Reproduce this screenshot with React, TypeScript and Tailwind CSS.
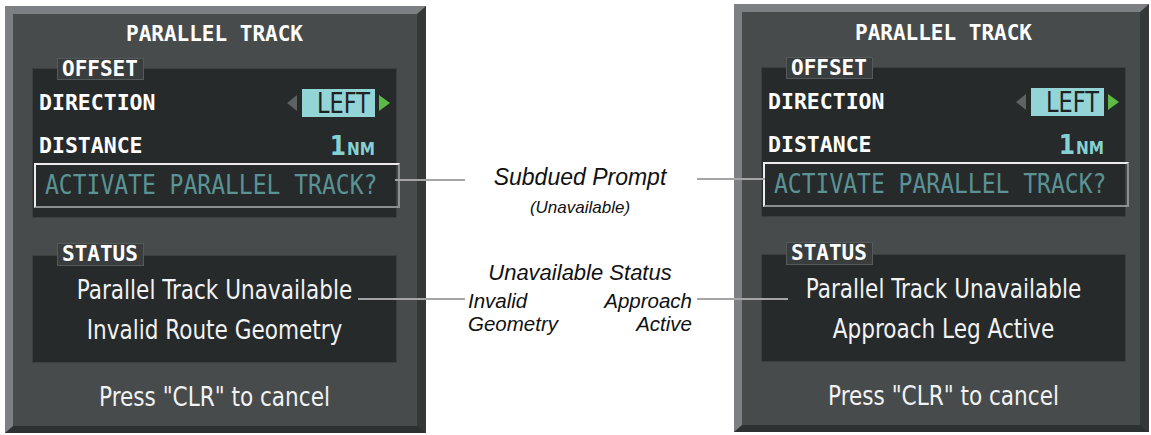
import React from 'react';

const mono = "font-['DejaVu_Sans_Mono',monospace]";
const cond = "font-['DejaVu_Sans_Condensed','DejaVu_Sans',sans-serif]";
const callout = "font-['Liberation_Sans',Arial,sans-serif] italic font-normal text-[#111111]";

function Tab({ label, className }: { label: string; className: string }) {
  return (
    <div
      className={`absolute left-[24px] w-[87px] pl-[4px] bg-[#393d3e] border border-[#54595a] flex items-center text-[21px] leading-none font-bold text-white ${mono} ${className}`}
    >
      {label}
    </div>
  );
}

function Panel({ reason, className }: { reason: string; className: string }) {
  return (
    <div
      className={`shrink-0 border-t-8 border-l-8 border-r-[9px] border-b-[7px] border-t-[#7c8082] border-l-[#7c8082] border-r-[#343839] border-b-[#2d3132] bg-[#474b4c] ${className}`}
    >
      <div className="w-[365px] ml-[19px] flex flex-col">
        {/* Title */}
        <div className={`h-[41px] flex items-center justify-center text-[21px] leading-none font-bold text-white ${mono}`}>
          PARALLEL TRACK
        </div>

        {/* Offset */}
        <div className="relative mt-[13px] h-[150px] bg-[#262a2b] border border-[#3b3f40] pt-[16px]">
          <Tab label="OFFSET" className="-top-[11px] h-[22px]" />
          <div className="h-[36px] flex items-center justify-between pl-[6px] pr-[6px]">
            <span className={`text-[21.5px] leading-none font-bold text-white ${mono}`}>DIRECTION</span>
            <div className="flex items-center">
              <svg width="10" height="16" viewBox="0 0 10 16">
                <polygon points="10,0 10,16 0,8" fill="#5d6263" />
              </svg>
              <div className={`ml-[5px] w-[73px] h-[28px] bg-[#93d4d7] flex items-center justify-end pr-[5px] text-[25px] leading-none text-[#1e2223] ${cond}`}>
                <span className="scale-y-[1.12]">LEFT</span>
              </div>
              <svg className="ml-[4px]" width="11" height="16" viewBox="0 0 11 16">
                <polygon points="0,0 0,16 11,8" fill="#5bbb45" />
              </svg>
            </div>
          </div>
          <div className="mt-[8px] h-[34px] flex items-center justify-between pl-[6px] pr-[21px]">
            <span className={`text-[21.5px] leading-none font-bold text-white ${mono}`}>DISTANCE</span>
            <span className={`flex items-baseline text-[#86d2d3] ${cond}`}>
              <span className="text-[26px] leading-none font-semibold">1</span>
              <span className="text-[17px] leading-none font-bold ml-[1px]">NM</span>
            </span>
          </div>
          <div
            className={`ml-[1px] w-[366px] h-[45px] border-2 border-t-[#ececec] border-l-[#ececec] border-r-[#8b8f90] border-b-[#8b8f90] flex items-center pl-[9px] text-[23px] leading-none text-[#5b9294] ${mono}`}
          >
            <span className="scale-y-[1.15] origin-center">ACTIVATE PARALLEL TRACK?</span>
          </div>
        </div>

        {/* Status */}
        <div className="relative mt-[37px] h-[108px] bg-[#262a2b] border border-[#3b3f40] pt-[21px] flex flex-col items-center">
          <Tab label="STATUS" className="-top-[13px] h-[23px]" />
          <div className={`h-[26px] flex items-center text-[24px] leading-none text-[#f2f2f2] scale-y-[1.08] ${cond}`}>
            Parallel Track Unavailable
          </div>
          <div className={`mt-[14px] h-[26px] flex items-center text-[24px] leading-none text-[#f2f2f2] scale-y-[1.08] ${cond}`}>
            {reason}
          </div>
        </div>

        {/* Footer */}
        <div className={`mt-[17px] h-[34px] flex items-center justify-center text-[24px] leading-none text-[#f2f2f2] scale-y-[1.08] ${cond}`}>
          Press "CLR" to cancel
        </div>
      </div>
    </div>
  );
}

export default function App() {
  return (
    <div className="relative w-[1151px] h-[435px] bg-white flex overflow-hidden">
      <Panel reason="Invalid Route Geometry" className="ml-[5px] mt-[6px] w-[421px] h-[427px]" />

      {/* Callouts */}
      <div className="w-[308px] shrink-0 flex flex-col items-center">
        <div className={`mt-[166px] text-[23px] leading-[23px] ${callout}`}>Subdued Prompt</div>
        <div className={`mt-[10px] text-[17px] leading-[17px] ${callout}`}>(Unavailable)</div>
        <div className={`mt-[46px] text-[22px] leading-[22px] ${callout}`}>Unavailable Status</div>
        <div className={`mt-[5px] w-full px-[42px] flex justify-between text-[20.5px] ${callout}`}>
          <div className="flex flex-col">
            <span className="leading-[23px]">Invalid</span>
            <span className="leading-[23px]">Geometry</span>
          </div>
          <div className="flex flex-col items-end">
            <span className="leading-[23px]">Approach</span>
            <span className="leading-[23px]">Active</span>
          </div>
        </div>
      </div>

      <Panel reason="Approach Leg Active" className="mt-[4px] w-[415px] h-[428px] pt-[1px]" />

      {/* Leader lines */}
      <div className="absolute left-[395px] top-[179px] w-[70px] h-[2px] bg-[#a5a5a5]" />
      <div className="absolute left-[697px] top-[178px] w-[68px] h-[2px] bg-[#a5a5a5]" />
      <div className="absolute left-[358px] top-[298px] w-[107px] h-[2px] bg-[#a5a5a5]" />
      <div className="absolute left-[697px] top-[298px] w-[91px] h-[2px] bg-[#a5a5a5]" />
    </div>
  );
}
